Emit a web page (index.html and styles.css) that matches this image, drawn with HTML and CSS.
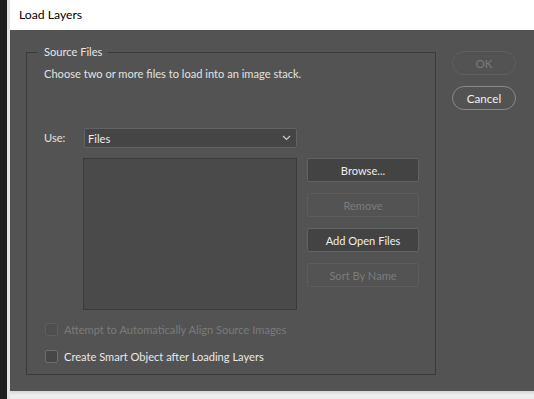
FILE: index.html
```html
<!DOCTYPE html>
<html>
<head>
<meta charset="utf-8">
<title>Load Layers</title>
<link rel="stylesheet" href="styles.css">
</head>
<body>
 <div class="screen">
  <!-- app behind the dialog -->
  <div class="edge"></div>

  <div class="dialog">
   <div class="titlebar">Load Layers</div>

   <div class="dialog-body">
    <fieldset class="group">
     <legend>Source Files</legend>
     <p class="desc">Choose two or more files to load into an image stack.</p>

     <div class="use-grid">
      <label class="use-label">Use:</label>
      <div class="select">
       <span>Files</span>
       <svg class="chevron" width="9" height="6" viewBox="0 0 9 6"><path d="M1 1 L4.5 4.5 L8 1" fill="none" stroke="#c9c9c9" stroke-width="1.2"/></svg>
      </div>
      <div class="file-list"></div>
      <div class="list-buttons">
       <button class="btn">Browse...</button>
       <button class="btn disabled">Remove</button>
       <button class="btn">Add Open Files</button>
       <button class="btn disabled">Sort By Name</button>
      </div>
     </div>

     <div class="check disabled"><span class="box"></span>Attempt to Automatically Align Source Images</div>
     <div class="check"><span class="box"></span>Create Smart Object after Loading Layers</div>
    </fieldset>

    <div class="side-buttons">
     <button class="pill disabled">OK</button>
     <button class="pill">Cancel</button>
    </div>
   </div>

   <div class="shadow"></div>
  </div>
 </div>
</body>
</html>
```

FILE: styles.css
```css
* {
  box-sizing: border-box;
}

body {
  margin: 0;
  background-color: #ebebeb;
  font-family: Lato, "Noto Sans", sans-serif;
  font-size: 11.1px;
}

.screen {
  display: flex;
  width: 534px;
  height: 399px;
}

.edge {
  width: 10px;
  border-left: 7px solid #1f1f1f;
  background-color: #e4e4e4;
}

.dialog {
  flex: 1;
  display: flex;
  flex-direction: column;
}

.titlebar {
  height: 30px;
  background-color: #ffffff;
  color: #000000;
  font-size: 12.2px;
  line-height: 30px;
  padding-left: 9px;
}

.dialog-body {
  height: 361px;
  background-color: #535353;
  display: flex;
  align-items: flex-start;
  padding: 14px 0 0 16px;
  color: #e2e2e2;
}

.shadow {
  flex: 1;
  background: linear-gradient(#d6d6d6, #ededed 4px);
}

/* group box */
.group {
  width: 410px;
  height: 331px;
  margin: 0;
  padding: 0 0 0 17px;
  border: 1px solid #3b3b3b;
}

.group legend {
  margin-left: -6px;
  padding: 0 6px;
  line-height: 16px;
  color: #e6e6e6;
}

.desc {
  margin: 6px 0 0 0;
  line-height: 15px;
}

.use-grid {
  display: grid;
  grid-template-columns: 40px 213px 112px;
  row-gap: 10px;
  margin-top: 47px;
}

.use-label {
  line-height: 20px;
  align-self: center;
}

.select {
  height: 20px;
  background-color: #454545;
  border: 1px solid #626262;
  border-radius: 2px;
  display: flex;
  align-items: center;
  justify-content: space-between;
  padding: 0 5px 0 3px;
  color: #eeeeee;
}

.file-list {
  grid-column: 2;
  height: 152px;
  margin-left: -1px;
  background-color: #4a4a4a;
  border: 1px solid #3b3b3b;
}

.list-buttons {
  display: flex;
  flex-direction: column;
  gap: 11px;
  margin-left: 10px;
}

.btn {
  width: 112px;
  height: 24px;
  background-color: #434343;
  border: 1px solid #626262;
  border-radius: 2px;
  color: #ededed;
  font-family: inherit;
  font-size: 11.1px;
  padding: 0;
}

.btn.disabled {
  background-color: #535353;
  border-color: #5c5c5c;
  color: #7c7c7c;
}

/* checkboxes */
.check {
  display: flex;
  align-items: center;
  height: 13px;
  margin-top: 13px;
  margin-left: 1px;
  line-height: 13px;
  color: #e8e8e8;
}

.check.disabled {
  color: #7a7a7a;
}

.check + .check {
  margin-top: 14px;
}

.box {
  width: 13px;
  height: 13px;
  margin-right: 6px;
  background-color: #474747;
  border: 1px solid #6e6e6e;
  border-radius: 2px;
}

.check.disabled .box {
  background-color: #4f4f4f;
  border-color: #5e5e5e;
}

/* OK / Cancel */
.side-buttons {
  display: flex;
  flex-direction: column;
  gap: 11px;
  margin-left: 16px;
  margin-top: 7px;
}

.pill {
  width: 64px;
  height: 24px;
  background-color: #535353;
  border: 1px solid #8a8a8a;
  border-radius: 12px;
  color: #f0f0f0;
  font-family: inherit;
  font-size: 11.6px;
  padding: 0;
}

.pill.disabled {
  border-color: #606060;
  color: #7a7a7a;
}
```
